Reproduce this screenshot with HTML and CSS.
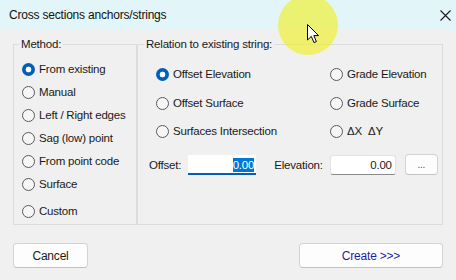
FILE: index.html
```html
<!DOCTYPE html>
<html>
<head>
  <title>Cross sections anchors/strings</title>
  <link rel="stylesheet" href="styles.css">
</head>
<body>
  <div class="dialog">
    <div class="titlebar">
      <span class="title">Cross sections anchors/strings</span>
      <svg class="close" width="11" height="11" viewBox="0 0 11 11">
        <path d="M0.5 0.5 L10.5 10.5 M10.5 0.5 L0.5 10.5" stroke="#1a1a1a" stroke-width="1.1"/>
      </svg>
    </div>

    <div class="content">
      <div class="groups">
        <fieldset class="group method">
          <legend>Method:</legend>
          <div class="method-list">
            <label class="opt"><span class="radio on"></span>From existing</label>
            <label class="opt"><span class="radio"></span>Manual</label>
            <label class="opt"><span class="radio"></span>Left / Right edges</label>
            <label class="opt"><span class="radio"></span>Sag (low) point</label>
            <label class="opt"><span class="radio"></span>From point code</label>
            <label class="opt"><span class="radio"></span>Surface</label>
            <label class="opt last"><span class="radio"></span>Custom</label>
          </div>
        </fieldset>

        <fieldset class="group relation">
          <legend>Relation to existing string:</legend>
          <div class="relation-grid">
            <label class="opt"><span class="radio on"></span>Offset Elevation</label>
            <label class="opt"><span class="radio"></span>Grade Elevation</label>
            <label class="opt"><span class="radio"></span>Offset Surface</label>
            <label class="opt"><span class="radio"></span>Grade Surface</label>
            <label class="opt"><span class="radio"></span>Surfaces Intersection</label>
            <label class="opt"><span class="radio"></span>ΔX&nbsp;&nbsp;ΔY</label>
          </div>
          <div class="fields">
            <span class="lbl">Offset:</span>
            <div class="input active"><span class="sel">0.00</span></div>
            <span class="lbl elev">Elevation:</span>
            <div class="input">0.00</div>
            <button class="btn small">...</button>
          </div>
        </fieldset>
      </div>

      <div class="actions">
        <button class="btn cancel">Cancel</button>
        <button class="btn create">Create &gt;&gt;&gt;</button>
      </div>
    </div>

    <!-- cursor highlight from the screen recording -->
    <div class="highlight"></div>
    <svg class="cursor" width="13" height="20" viewBox="0 0 13 20">
      <path d="M0.5 0.5 L0.5 16 L4.3 12.4 L7 18.6 L9.4 17.6 L6.8 11.6 L11.6 11.6 Z" fill="#fff" stroke="#000" stroke-width="1"/>
    </svg>
  </div>
</body>
</html>
```

FILE: styles.css
```css
body {
  margin: 0;
  background: #f0f0f0;
  font-family: 'Liberation Sans', Arial, sans-serif;
  font-size: 11.5px;
  letter-spacing: -0.2px;
  color: #1a1a1a;
}
.dialog {
  position: relative;
  width: 456px;
  height: 280px;
  overflow: hidden;
  background: #f0f0f0;
}
.titlebar {
  height: 30px;
  background: #e2f5f8;
  display: flex;
  align-items: center;
  justify-content: space-between;
  padding: 0 5px 0 9px;
}
.title {
  font-size: 12px;
  color: #111;
}
.content {
  padding: 7px 13px 0 13px;
}
.groups {
  display: flex;
  width: 430px;
  height: 188px;
}
.group {
  margin: 0;
  padding: 0;
  border: 1px solid #dcdcdc;
  min-width: 0;
  box-sizing: border-box;
}
.group legend {
  padding: 0 2px;
  line-height: 14px;
  color: #1a1a1a;
}
.method {
  width: 124px;
}
.method legend {
  margin-left: 5px;
}
.relation {
  width: 306px;
}
.relation legend {
  margin-left: 6px;
}
.method-list {
  display: flex;
  flex-direction: column;
  gap: 9px;
  padding: 11px 0 0 8px;
}
.opt {
  display: flex;
  align-items: center;
  gap: 4px;
  height: 14px;
  white-space: nowrap;
}
.opt.last {
  margin-top: 4px;
}
.radio {
  width: 11px;
  height: 11px;
  border: 1px solid #5a5a5a;
  border-radius: 50%;
  background: #f6f6f6;
  flex: none;
}
.radio.on {
  width: 13px;
  height: 13px;
  border: none;
  background: radial-gradient(circle, #fff 0 2.6px, #005fb8 3.2px);
}
.relation-grid {
  display: grid;
  grid-template-columns: 174px 1fr;
  grid-template-rows: 14px 14px 14px;
  row-gap: 15px;
  padding: 16px 0 0 18px;
}
.relation-grid .opt:nth-child(n+5) {
  margin-top: -1px;
}
.fields {
  display: flex;
  align-items: center;
  padding: 15px 0 0 11px;
}
.lbl {
  margin-right: 7px;
}
.lbl.elev {
  margin-left: 18px;
}
.input {
  width: 66px;
  height: 20px;
  box-sizing: border-box;
  background: #fff;
  border: 1px solid #e3e3e3;
  border-bottom-color: #8a8a8a;
  border-radius: 3px;
  text-align: right;
  line-height: 18px;
  padding-right: 3px;
}
.input.active {
  width: 68px;
  border: none;
  border-bottom: 2px solid #005fb8;
  border-radius: 0;
  padding-right: 2px;
  line-height: 20px;
}
.sel {
  background: #0078d7;
  color: #fff;
  padding: 1px 0;
}
.btn {
  font-family: inherit;
  font-size: 12px;
  letter-spacing: -0.2px;
  background: #fdfdfd;
  border: 1px solid #d3d3d3;
  border-bottom-color: #c2c2c2;
  border-radius: 4px;
  color: #1a1a1a;
  padding: 0;
}
.btn.small {
  width: 33px;
  height: 21px;
  margin-left: 9px;
  color: #555;
  font-size: 10px;
}
.actions {
  display: flex;
  justify-content: space-between;
  padding-top: 18px;
  width: 430px;
}
.cancel {
  width: 75px;
  height: 25px;
}
.create {
  width: 144px;
  height: 25px;
  color: #1f1fa3;
}
.highlight {
  position: absolute;
  left: 278px;
  top: -5px;
  width: 60px;
  height: 60px;
  border-radius: 50%;
  background: rgba(240, 240, 30, 0.62);
}
.cursor {
  position: absolute;
  left: 307px;
  top: 24px;
}
```
